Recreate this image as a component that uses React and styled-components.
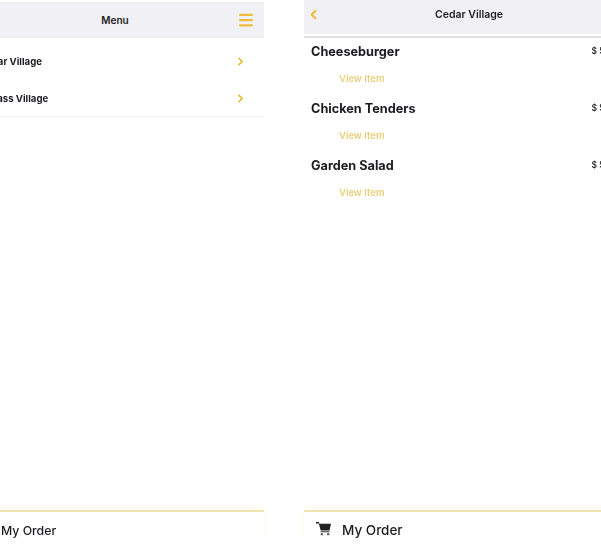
import React from "react";
import styled, { createGlobalStyle } from "styled-components";
import { ChevronRight, ChevronLeft, Menu as MenuIcon } from "lucide-react";

const Global = createGlobalStyle`
  html, body { margin: 0; padding: 0; background: #fff; }
  body { font-family: Inter, "Liberation Sans", sans-serif; color: #1c1c20; }
`;

const Page = styled.div`
  width: 601px;
  height: 545px;
  display: flex;
  overflow: hidden;
  gap: 40px;
  filter: blur(0.45px);
`;

const Screen = styled.section`
  flex: none;
  width: ${p => p.$width}px;
  margin-left: ${p => p.$offset || 0}px;
  height: 545px;
  display: flex;
  flex-direction: column;
`;

const Header = styled.header`
  flex: none;
  box-sizing: border-box;
  height: ${p => p.$height}px;
  margin-top: ${p => p.$top}px;
  display: flex;
  align-items: center;
  justify-content: space-between;
  background: #f0f0f5;
  padding: 0 ${p => p.$pad}px ${p => p.$lift || 0}px;
`;

const HeaderRule = styled.div`
  flex: none;
  height: 2px;
  margin-top: 2px;
  background: #dfdfe2;
`;

const Title = styled.h1`
  flex: 1;
  margin: 0;
  text-align: center;
  font-size: ${p => p.$size}px;
  font-weight: 600;
  color: #1c1c20;
`;

const IconSlot = styled.span`
  flex: none;
  width: 18px;
  display: flex;
  color: #eebc3e;
`;

const MenuList = styled.div`
  padding-top: 5px;
`;

const MenuRow = styled.div`
  height: ${p => (p.$last ? 36 : 37)}px;
  display: flex;
  align-items: center;
  justify-content: space-between;
  padding: 0 17px 0 13px;
  font-size: 9.6px;
  font-weight: 700;
  border-bottom: ${p => (p.$last ? "1px solid #f2f2f2" : "none")};
`;

const Chevron = styled(ChevronRight)`
  color: #e3b52f;
`;

const Items = styled.div`
  display: flex;
  flex-direction: column;
`;

const Item = styled.div`
  height: 57px;
  padding: 3px 7px 0;
  box-sizing: border-box;
  display: flex;
  flex-direction: column;
`;

const ItemTop = styled.div`
  display: flex;
  justify-content: space-between;
  align-items: center;
  height: 20px;
`;

const ItemName = styled.span`
  font-size: 12.7px;
  font-weight: 700;
  color: #1c1c20;
`;

const Price = styled.span`
  font-size: 8.5px;
  font-weight: 600;
  margin-right: 9px;
  color: #333;
`;

const ViewLink = styled.span`
  margin: 12px 0 0 28px;
  font-size: 9.5px;
  font-weight: 600;
  color: #e9d078;
`;

const Spacer = styled.div`
  flex: 1;
`;

const Footer = styled.footer`
  flex: none;
  box-sizing: border-box;
  height: 35px;
  border-top: 2px solid #f0e4b0;
  box-shadow: 0 -3px 6px #fdfbec;
  display: flex;
  align-items: center;
  gap: 11px;
  padding-top: 3px;
  padding-left: ${p => p.$pad}px;
  font-size: ${p => p.$size}px;
  font-weight: 500;
  color: #1c1c20;
`;

const CartIcon = () => (
  <svg width="15" height="15" viewBox="0 0 16 16" fill="#222" style={{ marginTop: -4 }}>
    <path d="M0 1h3l.6 2H16l-1.6 7H5L3 2.6H0z" />
    <path d="M5 11h9.5v1H5z" />
    <circle cx="6.2" cy="14" r="1.3" fill="#666" />
    <circle cx="13" cy="14" r="1.3" fill="#666" />
  </svg>
);

export default function App() {
  return (
    <>
      <Global />
      <Page>
        <Screen $width={298} $offset={-34}>
          <Header $top={2} $height={36} $pad={9}>
            <IconSlot />
            <Title $size={10}>Menu</Title>
            <IconSlot>
              <MenuIcon size={18} strokeWidth={3} />
            </IconSlot>
          </Header>
          <MenuList>
            <MenuRow>
              Cedar Village
              <Chevron size={13} strokeWidth={3} />
            </MenuRow>
            <MenuRow $last>
              Bypass Village
              <Chevron size={13} strokeWidth={3} />
            </MenuRow>
          </MenuList>
          <Spacer />
          <Footer $pad={35} $size={12.3}>My Order</Footer>
        </Screen>
        <Screen $width={330}>
          <Header $top={0} $height={34} $pad={2} $lift={6}>
            <IconSlot>
              <ChevronLeft size={15} strokeWidth={3.4} />
            </IconSlot>
            <Title $size={10.5}>Cedar Village</Title>
            <IconSlot />
          </Header>
          <HeaderRule />
          <Items>
            <Item>
              <ItemTop><ItemName>Cheeseburger</ItemName><Price>$ 5.00</Price></ItemTop>
              <ViewLink>View Item</ViewLink>
            </Item>
            <Item>
              <ItemTop><ItemName>Chicken Tenders</ItemName><Price>$ 5.00</Price></ItemTop>
              <ViewLink>View Item</ViewLink>
            </Item>
            <Item>
              <ItemTop><ItemName>Garden Salad</ItemName><Price>$ 5.00</Price></ItemTop>
              <ViewLink>View Item</ViewLink>
            </Item>
          </Items>
          <Spacer />
          <Footer $pad={12} $size={13.5}>
            <CartIcon />
            My Order
          </Footer>
        </Screen>
      </Page>
    </>
  );
}
